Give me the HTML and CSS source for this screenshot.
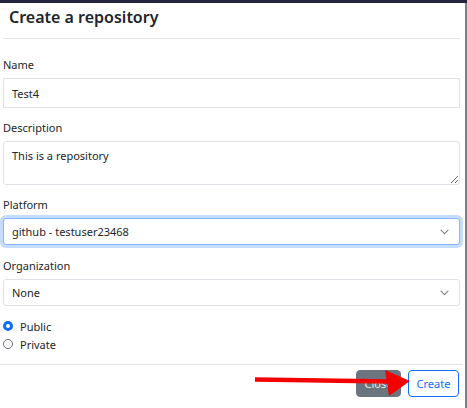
FILE: index.html
```html
<!DOCTYPE html>
<html>
<head>
<meta charset="utf-8">
<link rel="stylesheet" href="styles.css">
</head>
<body>
<div class="topbar"></div>
<div class="modal">
  <div class="header"><h1 class="title">Create a repository</h1></div>
  <div class="body">
    <div class="field">
      <label class="label">Name</label>
      <input class="control input" type="text" value="Test4">
    </div>
    <div class="field">
      <label class="label">Description</label>
      <textarea class="control textarea">This is a repository</textarea>
    </div>
    <div class="field field-select">
      <label class="label">Platform</label>
      <div class="select-wrap">
        <div class="control select focused">github - testuser23468</div>
        <svg class="chevron" width="9" height="6" viewBox="0 0 9 6"><path d="M1 1.2l3.5 3.5 3.5-3.5" fill="none" stroke="#7d828a" stroke-width="1.1" stroke-linecap="round" stroke-linejoin="round"/></svg>
      </div>
    </div>
    <div class="field">
      <label class="label">Organization</label>
      <div class="select-wrap">
        <div class="control select">None</div>
        <svg class="chevron" width="9" height="6" viewBox="0 0 9 6"><path d="M1 1.2l3.5 3.5 3.5-3.5" fill="none" stroke="#7d828a" stroke-width="1.1" stroke-linecap="round" stroke-linejoin="round"/></svg>
      </div>
    </div>
    <div class="radios">
      <div class="radio-row"><span class="radio checked"></span><span>Public</span></div>
      <div class="radio-row"><span class="radio"></span><span>Private</span></div>
    </div>
  </div>
  <div class="footer">
    <button class="btn btn-close">Close</button>
    <button class="btn btn-create">Create</button>
  </div>
</div>
<svg class="arrow" width="467" height="408" viewBox="0 0 467 408">
  <path d="M255 379.5 L390 381.5" stroke="#f50000" stroke-width="4.5" fill="none"/>
  <polygon points="385,370 410,381 389,396" fill="#f50000"/>
</svg>
</body>
</html>
```

FILE: styles.css
```css
html, body {
  margin: 0;
  padding: 0;
  background: #ffffff;
  overflow: hidden;
  height: 408px;
}
body {
  font-family: "Noto Sans", "Open Sans", sans-serif;
  color: #212529;
  font-size: 11px;
  position: relative;
}
.topbar {
  height: 3px;
  background: #23263a;
}
.modal {
  width: 465px;
  height: 405px;
  border-right: 2px solid #7d8085;
  display: flex;
  flex-direction: column;
}
.header {
  margin: 0 5px 0 3px;
  padding: 4px 6px 11px;
  border-bottom: 1px solid #e3e5e8;
}
.title {
  margin: 0;
  font-size: 16px;
  line-height: 20px;
  font-weight: 600;
  color: #212529;
}
.body {
  padding: 17px 5px 11px 3px;
  display: flex;
  flex-direction: column;
}
.field {
  display: flex;
  flex-direction: column;
  margin-bottom: 11px;
}
.field-select {
  margin-bottom: 12px;
}
.label {
  font-size: 11px;
  line-height: 18px;
  margin-bottom: 4px;
}
.control {
  box-sizing: border-box;
  width: 100%;
  border: 1px solid #dee2e6;
  border-radius: 3px;
  font-family: inherit;
  font-size: 11px;
  color: #212529;
  padding: 0 8px;
  background: #fff;
  margin: 0;
  outline: none;
}
.input {
  height: 30px;
  border-radius: 0;
}
.textarea {
  height: 44px;
  padding: 6px 8px;
  line-height: 16px;
  resize: vertical;
  display: block;
}
.select-wrap {
  position: relative;
}
.select {
  height: 27px;
  line-height: 25px;
}
.select.focused {
  border-color: #86b7fe;
  box-shadow: 0 0 0 3px #c4dcfd;
}
.chevron {
  position: absolute;
  right: 11px;
  top: 11px;
}
.radios {
  display: flex;
  flex-direction: column;
}
.radio-row {
  display: flex;
  align-items: center;
  gap: 7px;
  height: 18px;
  font-size: 11px;
}
.radio {
  box-sizing: border-box;
  width: 10px;
  height: 10px;
  border-radius: 50%;
  border: 1px solid #6d7279;
  background: #fff;
}
.radio.checked {
  border: 3px solid #0d6efd;
  background: #fff;
}
.footer {
  margin-right: 2px;
  border-top: 1px solid #e3e5e8;
  padding: 5px 4px 0 0;
  display: flex;
  justify-content: flex-end;
  gap: 7px;
}
.btn {
  box-sizing: border-box;
  height: 27px;
  border-radius: 4px;
  font-family: inherit;
  font-size: 11px;
  padding: 0;
  cursor: pointer;
}
.btn-close {
  width: 45px;
  background: #6c757d;
  border: 1px solid #6c757d;
  color: #e9ecef;
}
.btn-create {
  width: 51px;
  background: #fff;
  border: 1px solid #0d6efd;
  color: #0d6efd;
}
.arrow {
  position: absolute;
  left: 0;
  top: 0;
  pointer-events: none;
}
```
